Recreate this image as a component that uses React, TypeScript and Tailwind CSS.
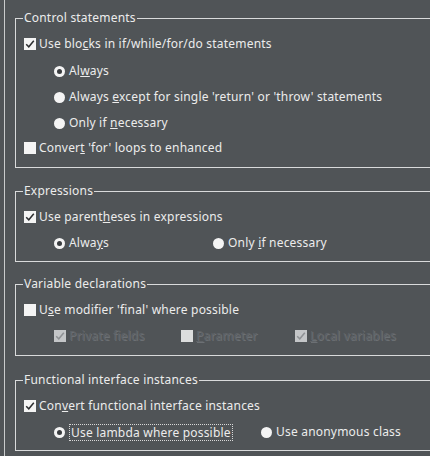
import React from 'react';

type Label = React.ReactNode;

const Check: React.FC<{ checked?: boolean; disabled?: boolean }> = ({ checked, disabled }) => (
  <span
    className={`relative flex h-[12px] w-[12px] shrink-0 items-center justify-center ${
      disabled ? (checked ? 'bg-[#c4c6c8]' : 'bg-[#dcdddd]') : 'bg-[#f4f4f4]'
    }`}
  >
    {checked && (
      <svg width="10" height="10" viewBox="0 0 10 10">
        <path
          d="M1.2 5.2 L3.8 7.8 L8.8 1.8"
          fill="none"
          stroke={disabled ? '#8e9194' : '#2c2e30'}
          strokeWidth="1.5"
        />
      </svg>
    )}
  </span>
);

const Radio: React.FC<{ selected?: boolean }> = ({ selected }) => (
  <span className="flex h-[11px] w-[11px] shrink-0 items-center justify-center rounded-full bg-[#f4f4f4]">
    {selected && <span className="h-[5px] w-[5px] rounded-full bg-[#3a3d40]" />}
  </span>
);

const CheckRow: React.FC<{ label: Label; checked?: boolean; disabled?: boolean; className?: string }> = ({
  label,
  checked,
  disabled,
  className = '',
}) => (
  <div className={`flex h-[26px] items-center gap-[3px] ${className}`}>
    <Check checked={checked} disabled={disabled} />
    <span
      className={
        disabled
          ? 'text-[#5f6367] [text-shadow:1px_1px_0_#6c7074]'
          : 'text-[#ececec]'
      }
    >
      {label}
    </span>
  </div>
);

const RadioRow: React.FC<{ label: Label; selected?: boolean; focused?: boolean; className?: string }> = ({
  label,
  selected,
  focused,
  className = '',
}) => (
  <div className={`flex h-[26px] items-center gap-[4px] ${className}`}>
    <Radio selected={selected} />
    <span
      className={`text-[#ececec] ${
        focused ? 'border border-dotted border-[#d8d8d8] px-[1px] leading-[15px]' : ''
      }`}
    >
      {label}
    </span>
  </div>
);

const Group: React.FC<{ title: string; children: React.ReactNode; className?: string }> = ({
  title,
  children,
  className = '',
}) => (
  <fieldset className={`mr-[-30px] border border-[#d9dadb] ${className}`}>
    <legend className="ml-[7px] px-[1px] leading-[16px] text-[#ececec]">{title}</legend>
    <div className="pl-[8px] pt-[5px]">{children}</div>
  </fieldset>
);

const m = (s: string) => <u className="underline-offset-[1px]">{s}</u>;

export default function App() {
  return (
    <div
      className="h-[456px] w-[430px] overflow-hidden bg-[#505457] pl-[4px] text-[12px] tracking-[0.2px]"
      style={{ fontFamily: '"Noto Sans", "Open Sans", sans-serif' }}
    >
      <div className="h-full border-l border-[#c9cbcc] pl-[10px] pt-[10px]">
        <Group title="Control statements" className="pb-[6px]">
          <CheckRow checked label={<>Use blo{m('c')}ks in if/while/for/do statements</>} />
          <div className="mt-[1px] pl-[30px]">
            <RadioRow selected label={<>Al{m('w')}ays</>} />
            <RadioRow label={<>Always {m('e')}xcept for single 'return' or 'throw' statements</>} />
            <RadioRow label={<>Only if {m('n')}ecessary</>} />
          </div>
          <CheckRow className="-mt-[1px]" label={<>Conver{m('t')} 'for' loops to enhanced</>} />
        </Group>

        <Group title="Expressions" className="mt-[15px] pb-[5px]">
          <CheckRow checked label={<>Use parent{m('h')}eses in expressions</>} />
          <div className="flex pl-[30px]">
            <RadioRow selected className="w-[159px]" label={<>Alwa{m('y')}s</>} />
            <RadioRow label={<>Only {m('i')}f necessary</>} />
          </div>
        </Group>

        <Group title="Variable declarations" className="mt-[14px] pb-[6px]">
          <CheckRow label={<>U{m('s')}e modifier 'final' where possible</>} />
          <div className="flex pl-[30px]">
            <CheckRow checked disabled className="w-[127px]" label="Private fields" />
            <CheckRow disabled className="w-[114px]" label={<>{m('P')}arameter</>} />
            <CheckRow checked disabled label={<>{m('L')}ocal variables</>} />
          </div>
        </Group>

        <Group title="Functional interface instances" className="mt-[16px] pb-[5px]">
          <CheckRow checked label={<>Con{m('v')}ert functional interface instances</>} />
          <div className="flex pl-[30px]">
            <RadioRow selected focused className="w-[207px]" label="Use lambda where possible" />
            <RadioRow label="Use anonymous class" />
          </div>
        </Group>
      </div>
    </div>
  );
}
